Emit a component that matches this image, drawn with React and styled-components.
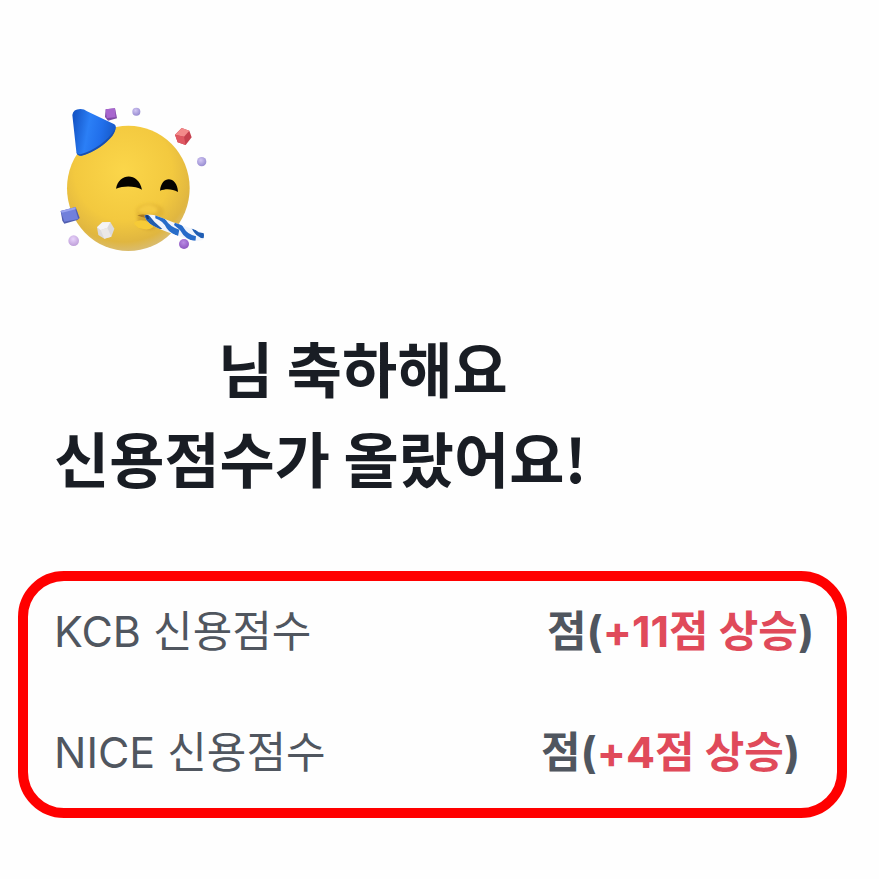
import React from 'react';
import styled, { createGlobalStyle } from 'styled-components';

const GlobalStyle = createGlobalStyle`
    * {
        box-sizing: border-box;
    }
    body {
        margin: 0;
        background: #fefefe;
        font-family: "Noto Sans CJK KR", sans-serif;
    }
`;

const Page = styled.main`
    padding: 105px 32px 60px 18px;
`;

const Header = styled.header`
    padding-left: 36px;
`;

const PartyIcon = styled.svg`
    display: block;
    width: 160px;
    height: 150px;
`;

const Title = styled.h1`
    margin: 67px 0 0;
    font-size: 60px;
    line-height: 90px;
    font-weight: 700;
    color: #191d24;
`;

const TitleLine = styled.span`
    display: flex;
`;

const Masked = styled.span`
    flex: none;
    width: ${props => props.$width}px;
`;

const ScoreBox = styled.dl`
    margin: 69px 0 0;
    padding: 20px 20px 26px 26px;
    border: 10px solid #ff0000;
    border-radius: 46px;
`;

const ScoreRow = styled.div`
    display: flex;
    height: 60px;
    align-items: center;
    font-family: Inter, "Noto Sans CJK KR", sans-serif;
    font-size: 43px;
    line-height: 60px;
    white-space: nowrap;
    color: #50565f;

    & + & {
        margin-top: 61px;
    }
`;

const Label = styled.dt`
    flex: 0 0 300px;
    font-weight: 400;
`;

const Value = styled.dd`
    display: flex;
    margin: 0;
    font-weight: 700;
`;

const Rise = styled.span`
    color: #e04a5a;
`;

function PartyFace() {
    return (
        <PartyIcon viewBox="12 30 480 450" role="img" aria-label="축하">
            <defs>
                <radialGradient id="face" cx="0.46" cy="0.36" r="0.66">
                    <stop offset="0" stopColor="#fbd64a" />
                    <stop offset="0.6" stopColor="#f3c93f" />
                    <stop offset="0.86" stopColor="#e0b640" />
                    <stop offset="1" stopColor="#d8bd78" />
                </radialGradient>
                <linearGradient id="hat" x1="0" y1="0.4" x2="1" y2="0.6">
                    <stop offset="0" stopColor="#1556c8" />
                    <stop offset="0.35" stopColor="#2b7ff6" />
                    <stop offset="0.65" stopColor="#216feb" />
                    <stop offset="1" stopColor="#1657c4" />
                </linearGradient>
                <radialGradient id="lilac" cx="0.4" cy="0.35" r="0.7">
                    <stop offset="0" stopColor="#d2c6f3" />
                    <stop offset="1" stopColor="#9489cf" />
                </radialGradient>
                <radialGradient id="pink" cx="0.45" cy="0.35" r="0.7">
                    <stop offset="0" stopColor="#e8d3fb" />
                    <stop offset="1" stopColor="#bb9bd6" />
                </radialGradient>
                <radialGradient id="violet" cx="0.45" cy="0.35" r="0.7">
                    <stop offset="0" stopColor="#b98be4" />
                    <stop offset="1" stopColor="#8a52bd" />
                </radialGradient>
                <filter id="soft" x="-30%" y="-30%" width="160%" height="160%">
                    <feGaussianBlur stdDeviation="5" />
                </filter>
                <clipPath id="straw">
                    <path d="M283 362 Q290 356 312 360 C350 374 390 390 440 406 L461 414 Q464 428 458 435 Q442 440 418 434 C372 418 322 402 300 386 Q286 374 283 362Z" />
                </clipPath>
            </defs>

            <ellipse cx="235" cy="280" rx="184" ry="188" fill="url(#face)" />
            <ellipse cx="300" cy="350" rx="42" ry="24" fill="#d8a92d" opacity="0.5" filter="url(#soft)" />
            <path d="M260 347 Q285 320 312 333 Q330 342 317 354 Q290 360 260 347Z" fill="#f4ca43" filter="url(#soft)" />
            <path d="M262 361 Q278 368 293 365 L318 400 Q295 411 265 392Z" fill="#bd8c22" opacity="0.55" filter="url(#soft)" />
            <path d="M252 383 Q263 372 286 377 Q308 388 311 396 Q296 408 271 400 Q254 393 252 383Z" fill="#f6cb37" />
            <path d="M262 361 Q278 356 295 361 L290 369 Q277 369 262 361Z" fill="#a87924" />

            <path d="M198 281 C207 233 265 231 276 284 C257 273 223 271 198 281Z" fill="#050300" />
            <path d="M330 287 C334 239 382 242 384 291 C367 281 347 280 330 287Z" fill="#050300" />

            <path d="M67 60 Q69 42 91 42 Q103 42 111 49 L193 88 Q202 95 194 110 C176 142 133 172 94 182 Q81 183 79 170Z" fill="url(#hat)" />
            <path d="M79 170 Q83 181 94 177 C130 168 174 137 195 103 Q193 119 181 130 C151 161 116 178 94 182 Q81 183 79 170Z" fill="#194fae" />

            <g clipPath="url(#straw)">
                <rect x="275" y="350" width="195" height="95" fill="#f1f5fc" />
                <path d="M280 354 L298 362 Q312 382 337 402 L322 402 Q296 388 280 366Z" fill="#205cad" />
                <path d="M316 356 Q338 362 348 376 Q360 396 388 404 L384 424 Q360 414 350 400 Q340 378 316 370Z" fill="#286dc9" />
                <path d="M376 380 Q396 386 402 400 Q412 418 438 424 L436 442 Q410 432 400 420 Q390 402 372 390Z" fill="#266ac8" />
                <path d="M424 398 Q438 404 446 412 L468 416 L462 430 Q438 428 424 398Z" fill="#205eb4" />
            </g>
            <path d="M287 361 L295 361 L297 372 L291 373Z" fill="#123978" />

            <path d="M167 43 L195 40 L201 70 L174 77 L165 66Z" fill="#7e49a3" />
            <path d="M167 43 L195 40 L197 67 L170 69Z" fill="#a866ce" />
            <circle cx="259" cy="50" r="12" fill="url(#lilac)" />

            <path d="M375 119 L395 99 L418 107 L425 127 L407 150 L383 142Z" fill="#c6414e" />
            <path d="M375 119 L395 99 L418 107 L402 125Z" fill="#f38a8a" />
            <path d="M375 119 L402 125 L407 150 L383 142Z" fill="#df5862" />
            <circle cx="455" cy="200" r="14" fill="url(#lilac)" />

            <path d="M32 348 L77 336 L89 369 L82 375 L43 386 L37 377Z" fill="#515eaf" />
            <path d="M32 348 L75 340 L85 372 L43 380Z" fill="#7180db" />
            <path d="M32 348 L77 336 L77 343 L36 353Z" fill="#99a3ef" />
            <circle cx="71" cy="437" r="16" fill="url(#pink)" />

            <path d="M141 397 L157 382 L181 381 L193 401 L184 425 L163 431 L145 420Z" fill="#dcdadc" />
            <path d="M141 397 L157 382 L181 381 L172 398 L152 405Z" fill="#f5f4f6" />
            <path d="M152 405 L172 398 L184 425 L163 431Z" fill="#ebe8e6" />
            <circle cx="402" cy="447" r="15" fill="url(#violet)" />
        </PartyIcon>
    );
}

const scores = [
    { label: 'KCB 신용점수', masked: 193, rise: '+11점 상승' },
    { label: 'NICE 신용점수', masked: 187, rise: '+4점 상승' },
];

function App() {
    return (
        <Page>
            <GlobalStyle />
            <Header>
                <PartyFace />
                <Title>
                    <TitleLine><Masked $width={164} />님 축하해요</TitleLine>
                    <TitleLine>신용점수가 올랐어요!</TitleLine>
                </Title>
            </Header>
            <ScoreBox>
                {scores.map(score => (
                    <ScoreRow key={score.label}>
                        <Label>{score.label}</Label>
                        <Value>
                            <Masked $width={score.masked} />
                            <span>점(<Rise>{score.rise}</Rise>)</span>
                        </Value>
                    </ScoreRow>
                ))}
            </ScoreBox>
        </Page>
    );
}

export default App;
